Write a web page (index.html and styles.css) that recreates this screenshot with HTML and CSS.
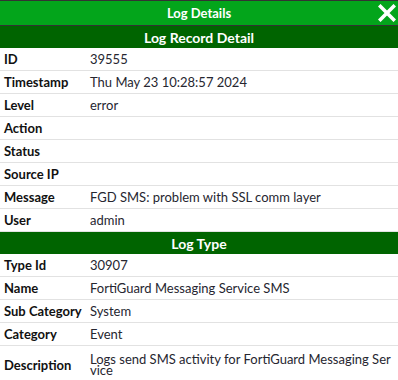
FILE: index.html
```html
<!DOCTYPE html>
<html lang="en">
<head>
  <meta charset="UTF-8">
  <title>Log Details</title>
  <link rel="stylesheet" href="styles.css">
</head>
<body>
  <div class="dialog">
    <div class="title-bar">
      <span class="title">Log Details</span>
      <button class="close" aria-label="Close">
        <svg width="18" height="18" viewBox="0 0 18 18">
          <path d="M2.5 2.5 L15.5 15.5 M15.5 2.5 L2.5 15.5" stroke="#fff" stroke-width="3.6" stroke-linecap="square"/>
        </svg>
      </button>
    </div>
    <table class="details">
      <tr><th colspan="2" class="section">Log Record Detail</th></tr>
      <tr><td class="label">ID</td><td class="value">39555</td></tr>
      <tr><td class="label">Timestamp</td><td class="value">Thu May 23 10:28:57 2024</td></tr>
      <tr><td class="label">Level</td><td class="value">error</td></tr>
      <tr><td class="label">Action</td><td class="value"></td></tr>
      <tr><td class="label">Status</td><td class="value"></td></tr>
      <tr><td class="label">Source IP</td><td class="value"></td></tr>
      <tr><td class="label">Message</td><td class="value">FGD SMS: problem with SSL comm layer</td></tr>
      <tr><td class="label">User</td><td class="value">admin</td></tr>
      <tr><th colspan="2" class="section">Log Type</th></tr>
      <tr><td class="label">Type Id</td><td class="value">30907</td></tr>
      <tr><td class="label">Name</td><td class="value">FortiGuard Messaging Service SMS</td></tr>
      <tr><td class="label">Sub Category</td><td class="value">System</td></tr>
      <tr><td class="label">Category</td><td class="value">Event</td></tr>
      <tr class="tall"><td class="label">Description</td><td class="value">Logs send SMS activity for FortiGuard Messaging Service</td></tr>
    </table>
  </div>
</body>
</html>
```

FILE: styles.css
```css
body {
  margin: 0;
  font-family: Lato, "Open Sans", sans-serif;
  font-size: 13px;
  background-color: #fff;
}

.dialog {
  width: 398px;
}

.title-bar {
  position: relative;
  height: 24px;
  background-color: #03a51b;
  border-top: 1px solid #333;
  border-bottom: 1px solid #333;
  display: flex;
  align-items: center;
  justify-content: center;
}

.title {
  color: #fff;
  font-weight: bold;
  font-size: 13px;
}

.close {
  position: absolute;
  right: 2px;
  top: 3px;
  padding: 0;
  border: none;
  background: none;
  width: 18px;
  height: 18px;
  cursor: pointer;
}

.details {
  width: 100%;
  border-collapse: collapse;
}

.section {
  background-color: #006400;
  color: #fff;
  font-weight: bold;
  font-size: 14px;
  height: 22px;
  padding: 0;
  text-align: center;
}

.label,
.value {
  padding: 5px 4px;
  line-height: 12px;
  border-bottom: 1px solid #e2e2e2;
  vertical-align: middle;
  height: 12px;
}

.label {
  width: 78px;
  font-weight: bold;
  color: #111;
  white-space: nowrap;
}

.value {
  color: #262630;
  word-break: break-all;
  line-height: 11px;
}

.tall .label,
.tall .value {
  padding-top: 8px;
}
```
